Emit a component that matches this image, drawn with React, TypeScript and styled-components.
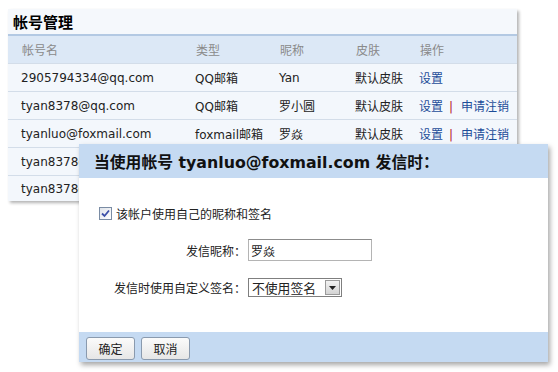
import React from 'react';
import styled, { createGlobalStyle } from 'styled-components';

const GlobalStyle = createGlobalStyle`
  html, body {
    margin: 0;
    background: #fff;
  }
  body {
    font-family: 'DejaVu Sans', 'Noto Sans CJK SC', sans-serif;
    font-size: 12px;
    color: #222;
  }
`;

const Page = styled.div`
  position: relative;
  width: 558px;
  height: 372px;
  padding: 9px 0 0 8px;
  box-sizing: border-box;
  overflow: hidden;
`;

const Panel = styled.div`
  width: 509px;
  background: #f3f7fc;
  box-shadow: 2px 2px 3px rgba(0, 0, 0, 0.3);
`;

const PanelTitle = styled.div`
  height: 25px;
  display: flex;
  align-items: center;
  padding-left: 5px;
  font-size: 15px;
  font-weight: bold;
  color: #000;
  background: #f5f8fc;
  border-bottom: 2px solid #b3c9e3;
`;

const Row = styled.div<{ $head?: boolean }>`
  display: grid;
  grid-template-columns: 174px 84px 76px 64px 1fr;
  align-items: center;
  height: 27px;
  padding-left: ${(p) => (p.$head ? 14 : 13)}px;
  background: ${(p) => (p.$head ? '#dce8f6' : '#f3f7fc')};
  color: ${(p) => (p.$head ? '#8a8a8a' : '#222')};
  border-bottom: 1px solid #d3dde9;
  white-space: nowrap;

  &:last-child {
    border-bottom: none;
    height: 25px;
  }
`;

const Link = styled.a`
  color: #1d4d99;
  text-decoration: none;
`;

const Sep = styled.span`
  color: #b3122e;
  margin: 0 8px 0 6px;
`;

const Dialog = styled.div`
  position: absolute;
  left: 79px;
  top: 144px;
  width: 469px;
  background: #fff;
  box-shadow: 2px 3px 5px rgba(0, 0, 0, 0.35);
`;

const DialogHead = styled.div`
  height: 34px;
  display: flex;
  align-items: center;
  padding-left: 15px;
  background: #c5daf2;
  color: #111;
  font-size: 15.8px;
  font-weight: bold;
`;

const DialogBody = styled.div`
  height: 154px;
  padding: 27px 0 0 20px;
  box-sizing: border-box;
`;

const CheckLine = styled.label`
  display: flex;
  align-items: center;
  gap: 4px;
  height: 16px;
  margin-bottom: 18px;
`;

const CheckBox = styled.span`
  width: 11px;
  height: 11px;
  border: 1px solid #7a8ca4;
  background: linear-gradient(135deg, #dfe3ea, #fff);
  display: flex;
  align-items: center;
  justify-content: center;
`;

const FormRow = styled.div`
  display: flex;
  align-items: center;
  margin-bottom: 17px;
`;

const Label = styled.span`
  width: 147px;
  text-align: right;
  flex: none;
  margin-right: 2px;
`;

const TextInput = styled.div<{ $w: number; $h: number }>`
  width: ${(p) => p.$w}px;
  height: ${(p) => p.$h}px;
  box-sizing: border-box;
  border: 1px solid #b4b4b4;
  border-top-color: #8c8c8c;
  display: flex;
  align-items: center;
  padding-left: 2px;
  background: #fff;
`;

const Select = styled.div`
  width: 94px;
  height: 19px;
  box-sizing: border-box;
  border: 1px solid #7f7f7f;
  display: flex;
  align-items: center;
  justify-content: space-between;
  padding: 0 1px 0 3px;
  font-size: 12.8px;
  background: #fff;
`;

const SelectArrow = styled.span`
  width: 15px;
  height: 15px;
  box-sizing: border-box;
  border: 1px solid #9a9a9a;
  background: linear-gradient(#f2f2f2, #d4d4d4);
  display: flex;
  align-items: center;
  justify-content: center;
`;

const DialogFoot = styled.div`
  height: 30px;
  background: #c5daf2;
  display: flex;
  align-items: center;
  gap: 6px;
  padding-left: 7px;
`;

const Button = styled.button`
  width: 49px;
  height: 23px;
  margin-top: 3px;
  font-family: 'Noto Sans CJK SC', sans-serif;
  font-size: 12px;
  color: #222;
  border: 1px solid #8a9aae;
  border-radius: 3px;
  background: linear-gradient(#fbfbfb, #e6e6e6);
  padding: 0;
`;

const accounts = [
  { name: '2905794334@qq.com', type: 'QQ邮箱', nick: 'Yan', cancel: false },
  { name: 'tyan8378@qq.com', type: 'QQ邮箱', nick: '罗小圆', cancel: true },
  { name: 'tyanluo@foxmail.com', type: 'foxmail邮箱', nick: '罗焱', cancel: true },
  { name: 'tyan8378@163.com', type: '163邮箱', nick: '罗焱', cancel: true },
  { name: 'tyan8378@sina.com', type: '新浪邮箱', nick: '罗焱', cancel: true },
];

const App = () => {
  return (
    <Page>
      <GlobalStyle />
      <Panel>
        <PanelTitle>帐号管理</PanelTitle>
        <Row $head>
          <span>帐号名</span>
          <span>类型</span>
          <span>昵称</span>
          <span>皮肤</span>
          <span>操作</span>
        </Row>
        {accounts.map((a) => (
          <Row key={a.name}>
            <span>{a.name}</span>
            <span>{a.type}</span>
            <span>{a.nick}</span>
            <span>默认皮肤</span>
            <span>
              <Link>设置</Link>
              {a.cancel && (
                <>
                  <Sep>|</Sep>
                  <Link>申请注销</Link>
                </>
              )}
            </span>
          </Row>
        ))}
      </Panel>

      <Dialog>
        <DialogHead>当使用帐号 tyanluo@foxmail.com 发信时：</DialogHead>
        <DialogBody>
          <CheckLine>
            <CheckBox>
              <svg width="9" height="9" viewBox="0 0 9 9">
                <path d="M1 4.5 L3.5 7 L8 1.5" fill="none" stroke="#3b4fa8" strokeWidth="1.8" />
              </svg>
            </CheckBox>
            该帐户使用自己的昵称和签名
          </CheckLine>
          <FormRow>
            <Label>发信昵称：</Label>
            <TextInput $w={124} $h={22}>罗焱</TextInput>
          </FormRow>
          <FormRow>
            <Label>发信时使用自定义签名：</Label>
            <Select>
              不使用签名
              <SelectArrow>
                <svg width="7" height="4" viewBox="0 0 7 4">
                  <path d="M0 0 L7 0 L3.5 4 Z" fill="#222" />
                </svg>
              </SelectArrow>
            </Select>
          </FormRow>
        </DialogBody>
        <DialogFoot>
          <Button>确定</Button>
          <Button>取消</Button>
        </DialogFoot>
      </Dialog>
    </Page>
  );
};

export default App;
